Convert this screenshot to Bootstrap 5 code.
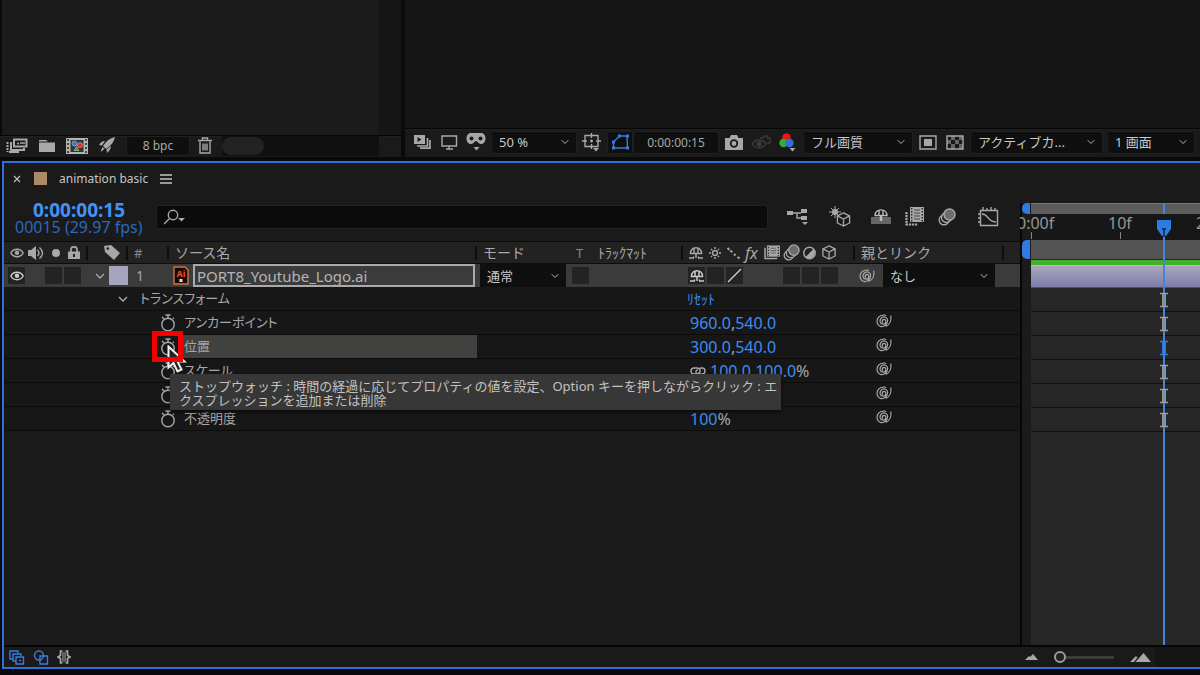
<!DOCTYPE html>
<html lang="ja" data-bs-theme="dark">
<head>
<meta charset="utf-8">
<meta name="viewport" content="width=device-width, initial-scale=1">
<title>animation basic</title>
<link href="https://cdn.jsdelivr.net/npm/bootstrap@5.3.0/dist/css/bootstrap.min.css" rel="stylesheet">
<style>
:root{--ui:#1a1a1a;--ink:#a8a8a8;--blue:#2f6fd6;--link:#3f8cf0;--well:#0f0f0f;--line:#0c0c0c;--row:24px}
body{background:#0a0a0c;color:var(--ink);font:14px/20px "Noto Sans","Noto Sans CJK JP",sans-serif;overflow:hidden}
svg{display:block;flex:none;fill:none;stroke:currentColor;stroke-width:1.4}
.solid{fill:currentColor;stroke:none}
button{background:none;border:0;padding:0;color:inherit;line-height:1}
a{color:var(--link);text-decoration:none}
.upper{height:161px}
.project{width:401px}
.bar{background:var(--ui);border-top:1px solid #050505;box-shadow:inset 0 1px #202020;padding-bottom:2px}
.project .bar{height:22px;padding-left:6px}
.project .well{height:20px;line-height:18px;width:64px}
.stage{background:#1b1b1b;border-right:22px solid #161616;margin-left:2px}
.rest{background:#101010;height:20px;margin-left:6px;margin-right:22px}
.pill{width:42px;height:18px;background:#232323}
.viewer{background:#161616}
.viewer .bar{height:29px;padding-left:6px;padding-right:5px}
.tool{width:22px;height:20px;display:flex;align-items:center;justify-content:center}
.gapped{gap:5px}
.well{background:var(--well);border:1px solid #202020;border-radius:3px;height:23px;line-height:22px;font-size:12px;text-align:center}
.accent{color:#3a7de0}
.form-select{--bs-form-select-bg-img:url("data:image/svg+xml,%3Csvg xmlns='http://www.w3.org/2000/svg' viewBox='0 0 12 8'%3E%3Cpath d='M1.500 1.500L6 6l4.500-4.500' fill='none' stroke='%23bdbdbd' stroke-width='1.4'/%3E%3C/svg%3E");
 background-color:var(--well);background-size:12px 8px;background-position:right 5px center;border:1px solid #202020;border-radius:3px;color:#c8c8c8;height:23px;padding:0 16px 0 7px;font-size:13px;line-height:20px}
.comp{border:2px solid var(--blue);border-right:0;margin:0 0 6px 2px;background:var(--ui)}
.tabs{height:31px;color:#c4c4c4;font-size:12px}
.swatch{width:13px;height:13px;background:#ab8a68}
.work{height:47px;padding-bottom:2px}
.timecode{width:152px;padding:4px 0 0 11px;line-height:17px}
.timecode b{font-size:19px;color:#4492f5;padding-left:18px}
.timecode span{font-size:16px;color:#2c68bd}
.search{background:#0b0b0b!important;border:1px solid #222;border-radius:3px;height:24px;padding:0 30px}
.switches{width:252px;padding-left:19px}
.layers{table-layout:fixed;width:100%;border-collapse:separate;border-spacing:0}
.layers th,.layers td{padding:0;font-weight:400;height:var(--row);vertical-align:middle;white-space:nowrap}
.layers th{height:23px;background:#222;border-top:1px solid var(--line);border-bottom:1px solid var(--line)}
.layers th>div{height:14px;border-right:2px solid #0e0e0e;display:flex;align-items:center;padding-left:6px}
.layers th>.open{border-color:transparent}
.layers .layer td{height:23px;background:#3b3b3b}
.layers .prop td{background:#171717;border-bottom:1px solid var(--line)}
.dim{font-size:13px;color:#888}
.box{width:17px;height:17px;background:#232323;flex:none;display:flex;align-items:center;justify-content:center}
.slots{display:grid;grid-template-columns:repeat(8,17px);column-gap:2px;padding-left:5px}
.layers th>.slot-head{padding-left:0}
.label-color{width:19px;height:19px;background:#a5a5be}
.form-control.source{height:23px;padding:0 2px;border:2px solid #aaa;border-radius:0;background:#3b3b3b;color:#b4b4b4;font-size:15px;line-height:18px}
.flat{border:0;border-radius:0}
.prow{padding-left:148px}
.watch{width:31px;height:23px;position:relative;display:flex;align-items:center;justify-content:center;flex:none}
.pname{height:23px;line-height:23px;padding-left:1px;font-size:13px;font-feature-settings:"palt"}
.picked{background:#414140}
.layers .value{font-size:16px;line-height:22px;padding-left:7px}
.layers .spiral{padding:0 0 4px 21px}
.focus-box{position:absolute;left:0;top:-4px;width:31px;height:31px;border:5px solid #f50000;z-index:3}
.pointer{position:absolute;left:15px;top:10px;z-index:2}
.hint{position:absolute;left:18px;top:39px;width:611px;height:36px;padding:5px 9px;background:#373737;color:#c2c2c2;font-size:13px;line-height:14px;text-align:left;white-space:nowrap;z-index:4;box-shadow:0 2px 4px #0008}
.track{width:15vw;position:relative;overflow:hidden}
.sky{height:40px}
.lane{background:#272727;border-left:2px solid #060606}
.lane>div{margin-left:9px}
.lane{box-shadow:inset 9px 0 #1b1b1b}
.nav-bar{height:11px;background:#5c5c5c;border-top:1px solid #777}
.ruler{height:26px;background:#171717;font-size:16px;position:relative;color:#969696}
.ruler span{position:absolute;top:-1px}
.ruler i{position:absolute;bottom:1px;width:1px;height:7px;background:#858585}
.area{height:19px;background:#545454}
.cached{height:5px;background:#43b02c;margin-top:1px}
.clip{height:23px;background:linear-gradient(#aaa6bd,#7d7daa);border-top:1px solid #bbb;border-bottom:1px solid #555}
.lane-row{height:var(--row);border-bottom:1px solid #111}
.head{position:absolute;left:143px;top:70px;bottom:0;width:2px;background:#4484dc;z-index:2}
.head-flag{position:absolute;left:137px;top:57px;z-index:3}
.head-tick{position:absolute;left:143px;top:40px;width:2px;height:11px;background:#4484dc}
.knob{position:absolute;background:#2f7be4;width:8px;border-radius:5px 0 0 5px;left:2px}
.keys{position:absolute;left:139px;top:125px;z-index:3;color:#9c9c9c}
.keys div{height:24px;display:flex;align-items:center}
.foot{height:22px;border-top:2px solid #060606;padding-left:5px}
.corner{width:45px;background:#151515}
.zoomer{appearance:none;width:60px;height:12px;background:linear-gradient(#3c3c3c,#3c3c3c) center/100% 3px no-repeat}
.zoomer::-webkit-slider-thumb{appearance:none;width:12px;height:12px;border:2px solid #9a9a9a;border-radius:50%;background:#222}
</style>
<script src="https://cdn.jsdelivr.net/npm/bootstrap@5.3.0/dist/js/bootstrap.bundle.min.js"></script>
</head>
<body class="vh-100 d-flex flex-column">
<svg width="0" height="0" class="position-absolute" aria-hidden="true">
 <symbol id="eye" viewBox="0 0 14 10"><path d="M.8 5C3.500 0 10.500 0 13.200 5 10.500 10 3.500 10 .8 5z"/><circle cx="7" cy="4.800" r="2.200" fill="currentColor" stroke="none"/></symbol>
 <symbol id="shy" viewBox="0 0 16 14"><path d="M2.500 7.500C2.500-.2 13.500-.2 13.500 7.500zM6 2.500v5M10 2.500v5M8 7v5M1 12h5M10 12h5M5.500 10.500v1.500M10.500 10.500v1.500" stroke-width="1.500"/></symbol>
 <symbol id="film" viewBox="0 0 18 16"><path d="M1 3v11.500h13" stroke-width="1.600"/><path d="M3 .5h14v12H3z" fill="currentColor" stroke="none"/><path d="M7 3.500h6M7 6h6M7 8.500h6" stroke="#666" stroke-width="1.200"/><path d="M4.700 2v10M15.300 2v10" stroke="#222" stroke-dasharray="1.500 1.500"/></symbol>
 <symbol id="blur" viewBox="0 0 18 18"><circle cx="6" cy="12" r="4.800"/><circle cx="8.500" cy="9.500" r="5" fill="#222"/><circle cx="11.500" cy="6.500" r="5.500" fill="#6c6c6c"/></symbol>
 <symbol id="cube" viewBox="0 0 16 16"><path d="M8 1l6.500 3.200v7.500L8 15l-6.500-3.300V4.200zM1.500 4.200L8 7.500l6.500-3.300M8 7.500V15"/></symbol>
 <symbol id="whirl" viewBox="0 0 16 14"><path d="M7 8.600C5.600 8 6 5.400 8 5.400c2.600.2 2.600 4.600-.6 4.800C3.600 10.300 3.200 6 5.400 4 8 1.800 11.800 3.400 11.600 6.800 11.300 10.800 8 12.900 5.200 12.600 1.600 12 .4 8 1.400 5.200 2.800 1.400 7 .4 10 1.400M14.600 1.600C15.600 6 14 10.600 9.600 12.400" stroke-width="1.200"/></symbol>
 <symbol id="timer" viewBox="0 0 16 18"><circle cx="8" cy="10.500" r="6.200"/><path d="M5.500 1h5M8 1v3M2 3l2 2M12.800 4.800l1-1"/></symbol>
 <symbol id="chev" viewBox="0 0 10 6"><path d="M1 1l4 4 4-4"/></symbol>
 <symbol id="beam" viewBox="0 0 10 16"><path d="M1 1.500h8M1 14.500h8M3.800 2v12M6.200 2v12" stroke-width="1.500"/></symbol>
</svg>

<main class="upper d-flex">
 <section class="project d-flex flex-column">
  <div class="stage flex-fill"></div>
  <div class="bar d-flex align-items-center">
   <button class="tool me-2" aria-label="解釈"><svg width="22" height="15" viewBox="0 0 22 15"><path d="M8 1.500h12.500v7H8zM5 4v8h13v-2" stroke-width="2"/><path d="M11 5.500h2M14 5h5"/><path d="M1.500 4v10" stroke-dasharray="2 1" stroke-width="2"/><path d="M3 14h10" stroke-width="2"/></svg></button>
   <button class="tool me-2" aria-label="フォルダー"><svg class="solid" width="18" height="14" viewBox="0 0 18 14"><path d="M1 1h7l2 1.500H1zM1 3.500h16V13H1z"/></svg></button>
   <button class="tool me-2" aria-label="コンポジション"><svg width="22" height="16" viewBox="0 0 22 16"><path d="M0 0h22v16H0z" fill="#b5b5b5" stroke="none"/><path d="M2 1v15M20 1v15" stroke="#222" stroke-width="1.500" stroke-dasharray="2 2"/><path d="M4.500 2h13v12h-13z" fill="#333" stroke="none"/><circle cx="8.500" cy="5.500" r="2.500" fill="#267adf" stroke="#ddd" stroke-width=".5"/><circle cx="14" cy="7" r="2.500" fill="#e22" stroke="#ddd" stroke-width=".5"/><path d="M8 12.500l2.500-4 2.500 4z" fill="#2a3" stroke="#ddd" stroke-width=".5"/></svg></button>
   <button class="tool me-2" aria-label="設定"><svg class="solid" width="18" height="17" viewBox="0 0 18 17"><path d="M17 0C12 1 8 4 5 9l3 3C13 9 16 5 17 0zM7 4C4 4 2 6 1 8l3 .5zM13 9c0 3-2 5-4 7l-.5-3.500zM4.500 10l2 2-4 3z"/></svg></button>
   <button class="well">8 bpc</button>
   <button class="tool ms-1" aria-label="削除"><svg width="14" height="17" viewBox="0 0 14 17"><path d="M0 3.500h14M4.500 3V1h5v2M2 4.500V16h10V4.500M5 6.500v7M7 6.500v7M9 6.500v7"/></svg></button>
   <div class="rest flex-fill d-flex align-items-center"><div class="pill rounded-pill"></div></div>
  </div>
  <div class="pt-1"></div>
 </section>
 <section class="viewer flex-fill d-flex flex-column justify-content-end ms-1">
  <div class="bar d-flex align-items-center">
   <div class="d-flex gapped me-1">
   <button class="tool" aria-label="プレビュー"><svg width="17" height="14" viewBox="0 0 17 14"><path d="M0 0h11v9H0z" class="solid"/><path d="M3.500 2v5l4-2.500z" fill="#1a1a1a" stroke="none"/><path d="M13.500 3v8H3M16 5v8.200H6" stroke-width="1.700"/></svg></button>
   <button class="tool" aria-label="モニター"><svg width="17" height="15" viewBox="0 0 17 15"><path d="M1 1h14.500v10H1zM5 14h7M8 11v3"/></svg></button>
   <button class="tool" aria-label="ゴーグル"><svg width="20" height="18" viewBox="0 0 20 18"><path class="solid" d="M5 0h10c6 0 6 11 0 11-3 0-3-3-5-3s-2 3-5 3c-6 0-6-11 0-11zM7.500 14h6l-3 3.500z"/><circle cx="5.500" cy="5.500" r="2" fill="#1a1a1a" stroke="none"/><circle cx="14.500" cy="5.500" r="2" fill="#1a1a1a" stroke="none"/></svg></button>
   </div>
   <select class="form-select me-1" style="width:86px" aria-label="倍率"><option>50 %</option></select>
   <button class="tool me-1" aria-label="ガイド"><svg width="20" height="19" viewBox="0 0 20 19"><path d="M3 2.500h13v11H3zM9.500 0v5M9.500 11v5M0 8h5M14 8h5M8 8h3M9.500 6.500v3"/><path class="solid" d="M11 15h6l-3 3.500z"/></svg></button>
   <button class="tool well accent" style="width:26px" aria-label="マスク"><svg width="19" height="16" viewBox="0 0 19 16"><path d="M2.500 14V8l6-6H16l.5 12z"/><path class="solid" d="M1 6.500h3v3H1zM7 .5h3v3H7zM15 .5h3v3h-3zM1 12.500h3v3H1zM15 12.500h3v3h-3z"/></svg></button>
   <span class="well me-1" style="width:86px">0:00:00:15</span>
   <div class="d-flex gapped me-1">
   <button class="tool" aria-label="スナップショット"><svg width="18" height="15" viewBox="0 0 18 15"><path class="solid" d="M0 3h4.500L6 0h6l1.500 3H18v12H0z"/><circle cx="9" cy="8.500" r="3.300" stroke="#1a1a1a" stroke-width="1.800"/></svg></button>
   <button class="tool" style="color:#3c3c3c" aria-label="表示"><svg width="20" height="16" viewBox="0 0 20 16"><path d="M1 10C4 5 12 5 15 10 12 15 4 15 1 10zM9 4h3l1-2h3l1 2h2v5h-3"/><circle cx="8" cy="10" r="2.500" class="solid"/></svg></button>
   <button class="tool" aria-label="チャンネル"><svg width="18" height="19" viewBox="0 0 18 19"><g stroke="none"><circle cx="7.500" cy="4.500" r="4.200" fill="#ec1515"/><circle cx="4.500" cy="10" r="4.200" fill="#3aa935"/><circle cx="10.500" cy="10" r="4.200" fill="#2f6fd6"/></g><path class="solid" d="M10.500 15h6l-3 3.500z"/></svg></button>
   </div>
   <select class="form-select me-1" style="width:110px" aria-label="画質"><option>フル画質</option></select>
   <div class="d-flex gapped me-1">
   <button class="tool" aria-label="関心領域"><svg width="18" height="15" viewBox="0 0 18 15"><path d="M1 1h16v13H1z"/><path class="solid" d="M5 4h8v7H5z"/></svg></button>
   <button class="tool" aria-label="透明グリッド"><svg width="18" height="15" viewBox="0 0 18 15"><path d="M1 1h16v13H1z"/><path class="solid" fill-opacity=".55" d="M5 1h4v4H5zM13 1h4v4h-4zM1 5h4v4H1zM9 5h4v4H9zM5 9h4v5H5zM13 9h4v5h-4z"/></svg></button>
   </div>
   <select class="form-select me-1 flex-fill" style="width:133px" aria-label="カメラ"><option>アクティブカ...</option></select>
   <select class="form-select" style="width:88px" aria-label="画面数"><option>1 画面</option></select>
  </div>
  <div class="pt-1" style="background:#0a0a0c"></div>
 </section>
</main>

<section class="comp flex-fill d-flex flex-column">
 <div class="d-flex flex-fill">
  <div class="flex-fill d-flex flex-column" style="min-width:0">
   <div class="tabs d-flex align-items-center">
    <button class="tool me-1" style="width:26px" aria-label="閉じる"><svg width="8" height="8" viewBox="0 0 8 8"><path d="M1 1l6 6M7 1L1 7" stroke-width="1.100"/></svg></button>
    <i class="swatch me-2"></i><span class="ms-1">animation basic</span>
    <button class="ms-2 ps-1" aria-label="メニュー"><svg width="12" height="10" viewBox="0 0 12 10"><path d="M0 1h12M0 5h12M0 9h12"/></svg></button>
   </div>
   <div class="work d-flex align-items-center">
    <div class="timecode d-flex flex-column"><b>0:00:00:15</b><span>00015 (29.97 fps)</span></div>
    <div class="flex-fill position-relative">
     <input class="form-control search" type="search" aria-label="検索">
     <svg class="position-absolute start-0 top-0 ms-2 mt-1" width="22" height="16" viewBox="0 0 22 16"><circle cx="9" cy="6" r="4.700"/><path d="M5.500 9.500L0 15"/><path class="solid" d="M14 9h7l-3.500 3.500z"/></svg>
    </div>
    <div class="switches d-flex align-items-center">
     <button style="margin-right:20px" aria-label="フローチャート"><svg width="22" height="17" viewBox="0 0 22 17"><path class="solid" d="M0 3h6v4H0zM14 1h6v4h-6zM14 8h6v4h-6zM15 14h6l-3 3z"/><path d="M6 5h8M14 10h-4V5"/></svg></button>
     <button style="margin-right:20px" aria-label="3D"><svg width="22" height="21" viewBox="0 0 22 21"><use href="#cube" x="7" y="6" width="15" height="15"/><path d="M6 0v12M0 6h12M2 2l8 8M10 2l-8 8" stroke-width="1"/><circle class="solid" cx="6" cy="6" r="3"/></svg></button>
     <button style="margin-right:14px" aria-label="シャイ"><svg width="20" height="17" viewBox="0 0 20 17"><path d="M0 9h20v7H0z" fill="#666" stroke="none"/><path d="M4 7.500C4 0 16 0 16 7.500zM8 2v5M12 2v5" stroke="#bbb"/><path d="M10 7v6" stroke="#bbb" stroke-width="2.500"/></svg></button>
     <button style="margin-right:14px" aria-label="フレームブレンド"><svg width="19" height="19" viewBox="0 0 19 19"><path class="solid" d="M5 0h14v15H5z"/><path d="M9 3h6M9 6h6M9 9h6M9 12h6" stroke="#666"/><path d="M6.700 1v14M17.300 1v14" stroke="#222" stroke-dasharray="1.500 1.500"/><path d="M1.500 5v12.500H13" stroke-width="2.200" stroke-dasharray="2.200 .8"/></svg></button>
     <button style="margin-right:22px" aria-label="モーションブラー"><svg width="18" height="18"><use href="#blur"/></svg></button>
     <button aria-label="グラフエディター"><svg width="21" height="20" viewBox="0 0 21 20"><path d="M2.500 3.500h17v15h-17zM4 7c7 0 5 8 14 8M5 0v3M9 1v2M13 0v3M17 1v2M0 7h2M0 11h2M0 15h2"/></svg></button>
    </div>
   </div>
   <table class="layers">
    <colgroup><col style="width:84px"><col style="width:40px"><col style="width:41px"><col><col style="width:91px"><col style="width:24px"><col style="width:91px"><col style="width:172px"><col style="width:165px"></colgroup>
    <thead><tr>
     <th><div><svg width="14" height="10"><use href="#eye"/></svg><svg class="ms-1" width="16" height="14" viewBox="0 0 16 14"><path class="solid" d="M0 4h3l5-4v14l-5-4H0z"/><path d="M9.500 4c2 2 2 4 0 6M11.500 1.500c4 3.500 4 7.500 0 11"/></svg><svg class="ms-2" width="8" height="8" viewBox="0 0 8 8"><circle class="solid" cx="4" cy="4" r="4"/></svg><svg class="ms-2" width="12" height="13" viewBox="0 0 12 13"><path class="solid" d="M0 5.500h12V13H0z"/><path d="M3 6V3.500c0-3.500 6-3.500 6 0V6" stroke-width="1.700"/><path d="M6 8v3" stroke="#222" stroke-width="2"/></svg></div></th>
     <th><div class="ps-3"><svg width="16" height="15" viewBox="0 0 16 15"><path class="solid" d="M0 1l7-1 9 8-6 7L1 7z"/><circle cx="3.800" cy="3.500" r="1.300" fill="#222" stroke="none"/></svg></div></th>
     <th><div class="dim">#</div></th>
     <th><div>ソース名</div></th>
     <th><div class="open">モード</div></th>
     <th><div class="open dim ps-2">T</div></th>
     <th><div>ﾄﾗｯｸﾏｯﾄ</div></th>
     <th><div class="slot-head"><div class="slots align-items-center">
      <svg width="16" height="14"><use href="#shy"/></svg>
      <svg width="16" height="14" viewBox="0 0 16 14"><path d="M8 1v2M8 11v2M2 7h2M12 7h2M4 3l1 1M12 3l-1 1M4 11l1-1M12 11l-1-1"/><circle cx="8" cy="7" r="2.500"/></svg>
      <svg width="16" height="14" viewBox="0 0 16 14"><path d="M1.500 2l5 4.500M8 8l1.500 1.500M11.500 11l3 2" stroke-width="2" stroke-dasharray="2.500 1.300"/></svg>
      <i style="font-size:16px;line-height:14px">fx</i>
      <svg width="17" height="15"><use href="#film"/></svg>
      <svg width="17" height="17"><use href="#blur"/></svg>
      <svg width="15" height="14" viewBox="0 0 14 14"><circle cx="7" cy="7" r="5.700"/><path class="solid" d="M11 3A5.700 5.700 0 013 11z"/></svg>
      <svg width="16" height="15"><use href="#cube"/></svg></div></div></th>
     <th><div class="me-3">親とリンク</div></th>
    </tr></thead>
    <tbody>
    <tr class="layer">
     <td><div class="d-flex ps-1"><button class="box me-3" aria-label="表示"><svg width="14" height="10" color="#ccc"><use href="#eye"/></svg></button><span class="box ms-1" style="margin-right:2px"></span><span class="box"></span></div></td>
     <td><div class="d-flex align-items-center justify-content-end"><button class="me-1" aria-label="折りたたむ"><svg width="10" height="6"><use href="#chev"/></svg></button><i class="label-color"></i></div></td>
     <td><div class="ps-2">1</div></td>
     <td><div class="d-flex align-items-center" style="padding:0 2px 0 4px"><svg class="me-1" width="16" height="19" viewBox="0 0 16 19"><path d="M1 1h11l3 3v14H1z" fill="#1c0a04" stroke="#c9774a"/><text x="8" y="11" text-anchor="middle" font-size="9" font-weight="700" fill="#f0502e" stroke="none">Ai</text><path d="M6.500 13h3v3h-3z" fill="#ddd" stroke="none"/></svg><input class="form-control source" value="PORT8_Youtube_Logo.ai" aria-label="ソース名"></div></td>
     <td><select class="form-select flat" style="width:86px;margin-left:3px" aria-label="モード"><option>通常</option></select></td>
     <td><span class="box ms-1"></span></td><td></td>
     <td><div class="slots"><button class="box" aria-label="シャイ"><svg width="16" height="14" color="#ccc"><use href="#shy"/></svg></button><span class="box"></span><button class="box" aria-label="画質"><svg width="15" height="15" viewBox="0 0 15 15" color="#ccc"><path d="M1 14L14 1"/></svg></button><b></b><b></b><span class="box"></span><span class="box"></span><span class="box"></span></div></td>
     <td><div class="d-flex align-items-center ps-1"><svg width="16" height="14"><use href="#whirl"/></svg><select class="form-select flat ms-2" style="width:112px" aria-label="親"><option>なし</option></select></div></td>
    </tr>
    <tr class="prop"><td colspan="4"><div class="d-flex align-items-center"><button style="margin-left:114px" class="me-2" aria-label="折りたたむ"><svg width="10" height="6"><use href="#chev"/></svg></button><span class="pname ps-1">トランスフォーム</span></div></td><td colspan="3"></td><td><a href="#" class="ms-1">ﾘｾｯﾄ</a></td><td></td></tr>
    <tr class="prop"><td colspan="4"><div class="prow d-flex"><button class="watch" aria-label="ストップウォッチ"><svg width="16" height="18"><use href="#timer"/></svg></button><span class="pname">アンカーポイント</span></div></td><td colspan="3"></td><td class="value"><a href="#">960.0</a>,<a href="#">540.0</a></td><td class="spiral"><svg width="16" height="14"><use href="#whirl"/></svg></td></tr>
    <tr class="prop"><td colspan="4"><div class="prow d-flex"><div class="watch"><button aria-label="ストップウォッチ" aria-describedby="hint"><svg width="16" height="18"><use href="#timer"/></svg></button><svg class="pointer" width="22" height="30" viewBox="0 0 22 30"><path d="M1.500 1.500v21l5-4.500 4 8.500 4-2-4-8h7z" fill="#222" stroke="#eee" stroke-width="2"/></svg><i class="focus-box"></i><div class="hint" id="hint" role="tooltip">ストップウォッチ : 時間の経過に応じてプロパティの値を設定、Option キーを押しながらクリック : エ<br>クスプレッションを追加または削除</div></div><span class="pname picked flex-fill">位置</span></div></td><td colspan="3"></td><td class="value"><a href="#">300.0</a>,<a href="#">540.0</a></td><td class="spiral"><svg width="16" height="14"><use href="#whirl"/></svg></td></tr>
    <tr class="prop"><td colspan="4"><div class="prow d-flex"><button class="watch" aria-label="ストップウォッチ"><svg width="16" height="18"><use href="#timer"/></svg></button><span class="pname">スケール</span></div></td><td colspan="3"></td><td class="value"><div class="d-flex"><button class="me-1" aria-label="縦横比を固定"><svg width="16" height="10" viewBox="0 0 16 10"><path d="M6 8H4C0 8 0 2 4 2h3c4 0 4 5 1 5M10 2h2c4 0 4 6 0 6H9C5 8 5 4 8 4"/></svg></button><span><a href="#">100.0</a>,<a href="#">100.0</a>%</span></div></td><td class="spiral"><svg width="16" height="14"><use href="#whirl"/></svg></td></tr>
    <tr class="prop"><td colspan="4"><div class="prow d-flex"><button class="watch" aria-label="ストップウォッチ"><svg width="16" height="18"><use href="#timer"/></svg></button></div></td><td colspan="3"></td><td></td><td class="spiral"><svg width="16" height="14"><use href="#whirl"/></svg></td></tr>
    <tr class="prop"><td colspan="4"><div class="prow d-flex"><button class="watch" aria-label="ストップウォッチ"><svg width="16" height="18"><use href="#timer"/></svg></button><span class="pname">不透明度</span></div></td><td colspan="3"></td><td class="value"><a href="#">100</a>%</td><td class="spiral"><svg width="16" height="14"><use href="#whirl"/></svg></td></tr>
    </tbody>
   </table>
  </div>
  <div class="track flex-shrink-0 d-flex flex-column">
   <div class="sky"></div>
   <div class="lane flex-fill"><div class="nav-bar"></div><div class="ruler"><span style="left:-14px">0:00f</span><i style="left:0"></i><span style="left:77px">10f</span><i style="left:89px"></i><span style="left:165px">20f</span></div><div class="area"></div><div class="cached"></div><div class="clip"></div>
   <div class="lane-row"></div><div class="lane-row"></div><div class="lane-row"></div><div class="lane-row"></div><div class="lane-row"></div><div class="lane-row"></div></div>
   <i class="knob" style="top:40px;height:11px"></i><i class="knob" style="top:77px;height:19px"></i>
   <i class="head-tick"></i><div class="head"></div>
   <svg class="head-flag" width="14" height="17" viewBox="0 0 14 17"><path d="M0 0h14v9l-5 7H5L0 9z" fill="#2f7be4" stroke="none"/><path d="M5 9h4M7 9v8" stroke="#123"/></svg>
   <div class="keys"><div><svg width="10" height="16"><use href="#beam"/></svg></div><div><svg width="10" height="16"><use href="#beam"/></svg></div><div style="color:#2f7be4"><svg width="10" height="16"><use href="#beam"/></svg></div><div><svg width="10" height="16"><use href="#beam"/></svg></div><div><svg width="10" height="16"><use href="#beam"/></svg></div><div><svg width="10" height="16"><use href="#beam"/></svg></div></div>
  </div>
 </div>
 <footer class="foot d-flex align-items-center">
  <button class="me-2 accent" aria-label="スイッチ"><svg width="16" height="15" viewBox="0 0 16 15"><path d="M4 9H1V1h8v2M7 11H4V4h8v2M7 7h7.500v7H7zM10 10.500h2"/></svg></button>
  <button class="me-2 accent" aria-label="転送制御"><svg width="16" height="15" viewBox="0 0 16 15"><circle cx="6" cy="5.500" r="4.500"/><path d="M7 6h7.500v8H7z"/></svg></button>
  <button aria-label="時間" class="me-auto"><svg width="14" height="14" viewBox="0 0 14 14"><path class="solid" fill-opacity=".5" d="M5 2h4v10H5z"/><path d="M5.500 1H3.500v4.500L1 7l2.500 1.500V13h2M8.500 1h2v4.500L13 7l-2.500 1.500V13h-2" stroke-width="1.700"/></svg></button>
  <svg width="13" height="6" viewBox="0 0 13 6"><path class="solid" d="M0 6l4-4 1 1 3-3 5 6z"/></svg>
  <input class="zoomer mx-3" type="range" value="0" aria-label="ズーム">
  <svg width="21" height="9" viewBox="0 0 21 9"><path class="solid" d="M0 9l6-6 1.500 1.500L4 9zM5.500 9l8-9L21 9z"/></svg>
  <span class="corner align-self-stretch ms-1"></span>
 </footer>
</section>
</body>
</html>
